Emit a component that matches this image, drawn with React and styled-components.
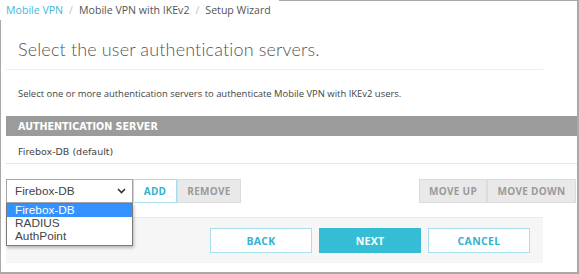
import React from "react";
import styled, { createGlobalStyle } from "styled-components";

const Global = createGlobalStyle`
  html, body { margin: 0; padding: 0; background: #fff; }
  * { box-sizing: border-box; }
`;

const Page = styled.div`
  position: relative;
  width: 579px;
  height: 274px;
  border-right: 2px solid #a9a9a9;
  border-bottom: 2px solid #a9a9a9;
  display: flex;
  flex-direction: column;
  overflow: hidden;
  font-family: "Open Sans", "Liberation Sans", sans-serif;
`;

const Crumbs = styled.div`
  display: flex;
  align-items: flex-start;
  height: 20px;
`;

const CrumbText = styled.div`
  display: flex;
  align-items: center;
  gap: 6px;
  height: 20px;
  padding-left: 6px;
  font-size: 10.6px;
  color: #555;
  white-space: nowrap;
`;

const Crumb = styled.span`
  color: ${(p) => (p.$link ? "#45b7d6" : "#555")};
`;

const Sep = styled.span`
  color: #c4c4c4;
`;

const TopRule = styled.div`
  flex: 1;
  margin-left: 8px;
  border-top: 1px solid #a9a9a9;
`;

const Body = styled.div`
  flex: 1;
  border-left: 1px solid #a9a9a9;
  padding-left: 5px;
  display: flex;
  flex-direction: column;
`;

const TitleBlock = styled.div`
  width: 537px;
  height: 50px;
  border-bottom: 1px solid #eeeeee;
  display: flex;
  align-items: center;
  padding: 9px 0 0 12px;
`;

const Title = styled.h1`
  margin: 0;
  font-family: "Lato", "Open Sans", sans-serif;
  font-weight: 300;
  font-size: 18px;
  color: #555;
  letter-spacing: 0.15px;
`;

const Desc = styled.p`
  margin: 0;
  height: 46px;
  display: flex;
  align-items: center;
  padding-left: 12px;
  font-size: 9.45px;
  color: #444;
`;

const HeadBar = styled.div`
  height: 20px;
  background: #9b9b9b;
  display: flex;
  align-items: center;
  padding-left: 12px;
  font-family: "DejaVu Sans", Verdana, sans-serif;
  font-weight: bold;
  font-size: 9.6px;
  color: #fff;
`;

const Row = styled.div`
  height: 28px;
  border-bottom: 1px solid #e6e6e6;
  display: flex;
  align-items: center;
  padding: 3px 0 0 12px;
  font-family: "DejaVu Sans", Verdana, sans-serif;
  font-size: 9.5px;
  color: #444;
`;

const Controls = styled.div`
  position: relative;
  margin-top: 15px;
  height: 24px;
  display: flex;
  align-items: stretch;
  padding-right: 1px;
`;

const Group = styled.div`
  display: flex;
  align-items: stretch;
`;

const Spacer = styled.div`
  flex: 1;
`;

const Select = styled.div`
  width: 127px;
  border: 1px solid #a6a6a6;
  background: #fff;
  display: flex;
  align-items: center;
  justify-content: space-between;
  padding: 0 6px 0 8px;
  font-family: "Liberation Sans", Arial, sans-serif;
  font-size: 11.8px;
  color: #444;
`;

const Btn = styled.button`
  font-family: "Open Sans", "Liberation Sans", sans-serif;
  font-weight: 700;
  font-size: 10px;
  letter-spacing: 0.3px;
  padding: 0;
  width: ${(p) => p.$w}px;
  cursor: pointer;
  border: 1px solid ${(p) => (p.$variant === "outline" ? "#a8dfec" : p.$variant === "solid" ? "#36bdd6" : "#dcdcdc")};
  background: ${(p) => (p.$variant === "outline" ? "#fff" : p.$variant === "solid" ? "#36bdd6" : "#e9e9e9")};
  color: ${(p) => (p.$variant === "outline" ? "#33b3d1" : p.$variant === "solid" ? "#fff" : "#9a9a9a")};
`;

const List = styled.ul`
  position: absolute;
  left: 0;
  top: 24px;
  width: 127px;
  margin: 0;
  padding: 0 0 2px;
  list-style: none;
  background: #fff;
  border: 1px solid #7a7a7a;
  box-shadow: 1px 2px 3px rgba(0, 0, 0, 0.25);
  font-family: "Liberation Sans", Arial, sans-serif;
  font-size: 11.8px;
  z-index: 2;
`;

const Item = styled.li`
  height: 13px;
  line-height: 13px;
  padding-left: 8px;
  background: ${(p) => (p.$active ? "#3392ff" : "transparent")};
  color: ${(p) => (p.$active ? "#fff" : "#444")};
`;

const Footer = styled.div`
  margin-top: 14px;
  width: 537px;
  height: 46px;
  border-top: 1px solid #ececec;
  background: #f6f6f6;
  display: flex;
  align-items: center;
  justify-content: flex-end;
  gap: 7px;
  padding-right: 13px;
`;

const FootBtn = styled(Btn)`
  height: 25px;
  font-size: 10.5px;
`;

const Chevron = () => (
  <svg width="9" height="6" viewBox="0 0 9 6" aria-hidden="true">
    <path d="M1 1l3.5 3.5L8 1" fill="none" stroke="#333" strokeWidth="1.6" />
  </svg>
);

export default function App() {
  return (
    <>
      <Global />
      <Page>
        <Crumbs>
          <CrumbText>
            <Crumb $link>Mobile VPN</Crumb>
            <Sep>/</Sep>
            <Crumb>Mobile VPN with IKEv2</Crumb>
            <Sep>/</Sep>
            <Crumb>Setup Wizard</Crumb>
          </CrumbText>
          <TopRule />
        </Crumbs>
        <Body>
          <TitleBlock>
            <Title>Select the user authentication servers.</Title>
          </TitleBlock>
          <Desc>
            Select one or more authentication servers to authenticate Mobile VPN with IKEv2 users.
          </Desc>
          <HeadBar>AUTHENTICATION SERVER</HeadBar>
          <Row>Firebox-DB (default)</Row>
          <Controls>
            <Group>
              <Select>
                <span>Firebox-DB</span>
                <Chevron />
              </Select>
              <Btn $variant="outline" $w={44}>ADD</Btn>
              <Btn $w={64}>REMOVE</Btn>
            </Group>
            <Spacer />
            <Group>
              <Btn $w={68}>MOVE UP</Btn>
              <Btn $w={89}>MOVE DOWN</Btn>
            </Group>
            <List>
              <Item $active>Firebox-DB</Item>
              <Item>RADIUS</Item>
              <Item>AuthPoint</Item>
            </List>
          </Controls>
          <Footer>
            <FootBtn $variant="outline" $w={102}>BACK</FootBtn>
            <FootBtn $variant="solid" $w={102}>NEXT</FootBtn>
            <FootBtn $variant="outline" $w={102}>CANCEL</FootBtn>
          </Footer>
        </Body>
      </Page>
    </>
  );
}
